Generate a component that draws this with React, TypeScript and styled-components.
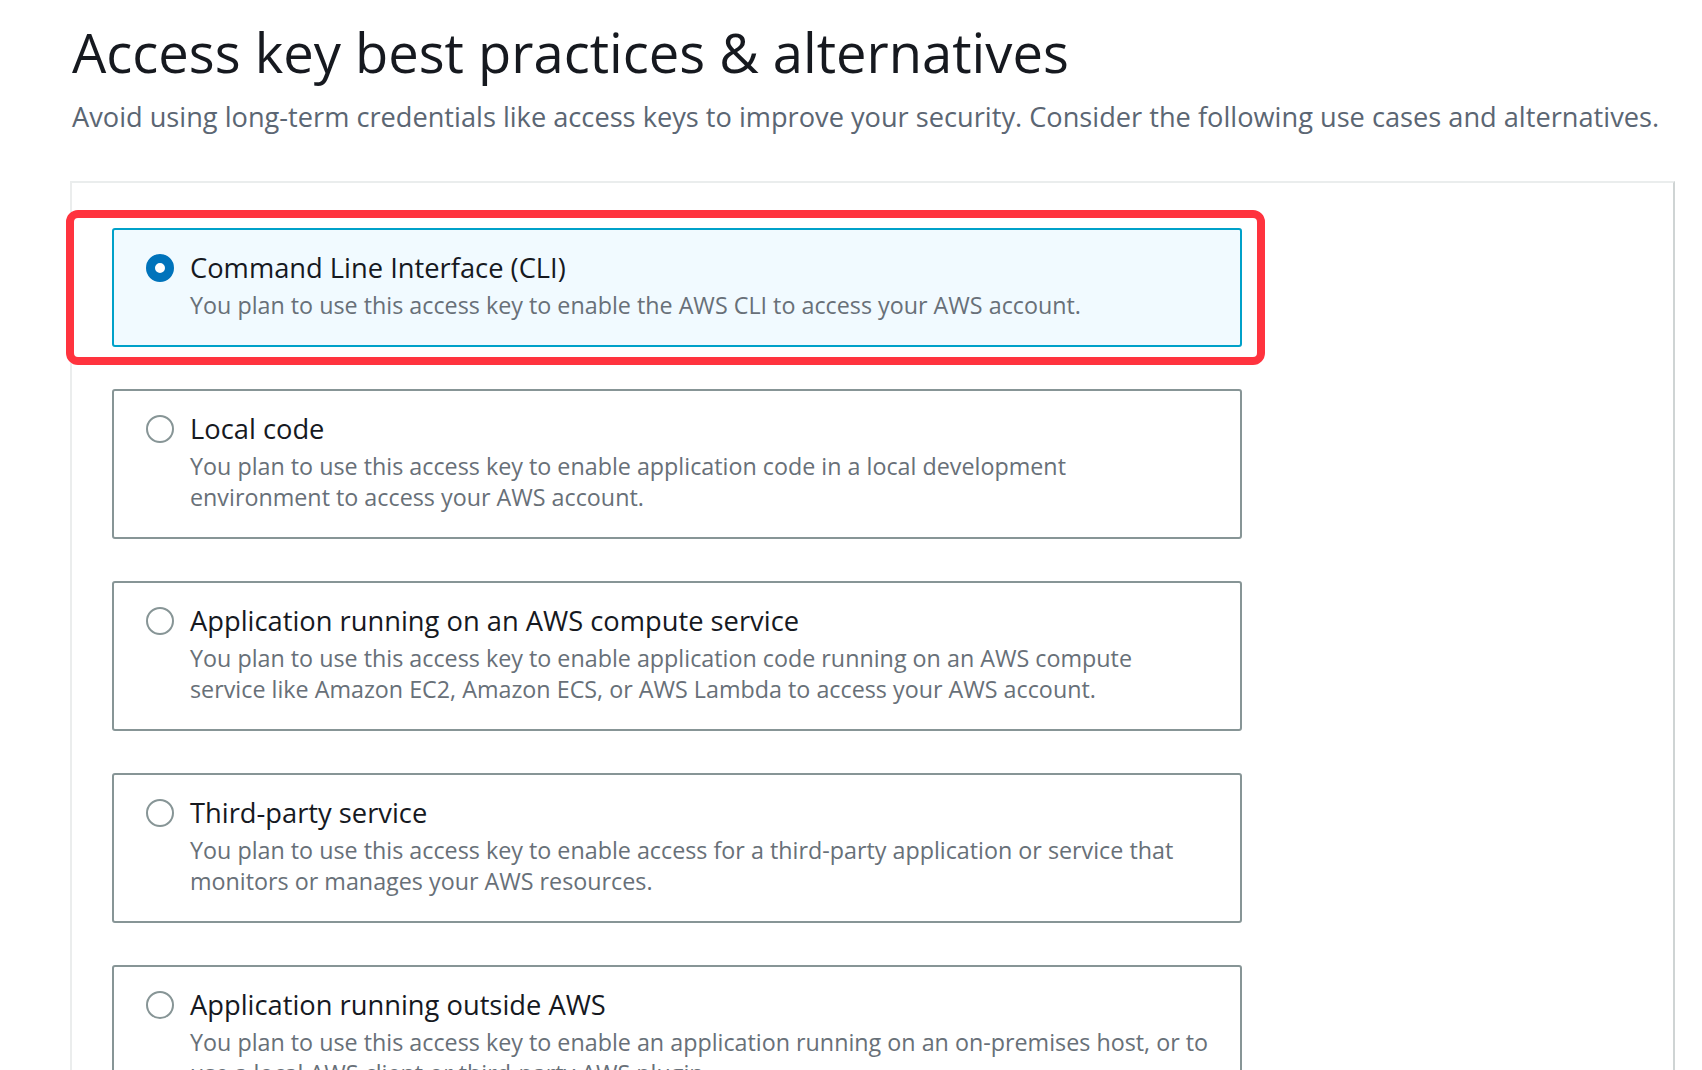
import React from "react";
import styled, { createGlobalStyle } from "styled-components";

const GlobalStyle = createGlobalStyle`
  html, body {
    margin: 0;
    padding: 0;
    background: #ffffff;
    overflow: hidden;
  }
  body {
    font-family: "Open Sans", "Noto Sans", sans-serif;
    -webkit-font-smoothing: antialiased;
  }
`;

const Page = styled.div`
  padding: 20px 0 0 70px;
  width: 1605px;
`;

const Header = styled.header`
  padding-left: 2px;
`;

const Title = styled.h1`
  margin: 0;
  font-size: 54.3px;
  line-height: 64px;
  font-weight: 500;
  color: #16191f;
`;

const Subtitle = styled.p`
  margin: 15px 0 0;
  font-size: 27.2px;
  line-height: 36px;
  color: #5b6673;
  white-space: nowrap;
`;

const Panel = styled.section`
  margin-top: 46px;
  border-top: 2px solid #eaeded;
  border-left: 2px solid #ebeded;
  border-right: 2px solid #cfd4d4;
  padding: 45px 0 0 40px;
  height: 1000px;
  box-sizing: border-box;
`;

const OptionList = styled.div`
  display: flex;
  flex-direction: column;
  gap: 42px;
  width: 1130px;
`;

const Card = styled.label<{ $selected?: boolean }>`
  position: relative;
  display: flex;
  align-items: flex-start;
  gap: 16px;
  padding: 18px 32px 24px 32px;
  border: 2px solid ${(p) => (p.$selected ? "#00a1c9" : "#879596")};
  border-radius: 3px;
  background: ${(p) => (p.$selected ? "#f1faff" : "#ffffff")};
`;

const Highlight = styled.span`
  position: absolute;
  top: -20px;
  left: -48px;
  right: -25px;
  bottom: -20px;
  border: 8px solid #ff333e;
  border-radius: 12px;
  pointer-events: none;
`;

const Radio = styled.span<{ $checked?: boolean }>`
  flex: none;
  width: 28px;
  height: 28px;
  margin-top: 6px;
  box-sizing: border-box;
  border-radius: 50%;
  background: #ffffff;
  border: ${(p) => (p.$checked ? "9px solid #0073bb" : "2px solid #879596")};
`;

const Texts = styled.span`
  display: flex;
  flex-direction: column;
`;

const OptionTitle = styled.span`
  font-size: 27.3px;
  line-height: 40px;
  color: #16191f;
`;

const OptionDesc = styled.span`
  margin-top: 2px;
  font-size: 23.3px;
  line-height: 31px;
  color: #687078;
`;

const Line = styled.span`
  display: block;
  white-space: nowrap;
`;

type Option = { title: string; lines: string[]; selected?: boolean };

const options: Option[] = [
  {
    title: "Command Line Interface (CLI)",
    lines: ["You plan to use this access key to enable the AWS CLI to access your AWS account."],
    selected: true,
  },
  {
    title: "Local code",
    lines: [
      "You plan to use this access key to enable application code in a local development",
      "environment to access your AWS account.",
    ],
  },
  {
    title: "Application running on an AWS compute service",
    lines: [
      "You plan to use this access key to enable application code running on an AWS compute",
      "service like Amazon EC2, Amazon ECS, or AWS Lambda to access your AWS account.",
    ],
  },
  {
    title: "Third-party service",
    lines: [
      "You plan to use this access key to enable access for a third-party application or service that",
      "monitors or manages your AWS resources.",
    ],
  },
  {
    title: "Application running outside AWS",
    lines: [
      "You plan to use this access key to enable an application running on an on-premises host, or to",
      "use a local AWS client or third-party AWS plugin.",
    ],
  },
];

export default function App() {
  return (
    <>
      <GlobalStyle />
      <Page>
        <Header>
          <Title>Access key best practices &amp; alternatives</Title>
          <Subtitle>
            Avoid using long-term credentials like access keys to improve your security. Consider the following use
            cases and alternatives.
          </Subtitle>
        </Header>
        <Panel>
          <OptionList>
            {options.map((o) => (
              <Card key={o.title} $selected={o.selected}>
                {o.selected && <Highlight />}
                <Radio $checked={o.selected} />
                <Texts>
                  <OptionTitle>{o.title}</OptionTitle>
                  <OptionDesc>
                    {o.lines.map((l) => (
                      <Line key={l}>{l}</Line>
                    ))}
                  </OptionDesc>
                </Texts>
              </Card>
            ))}
          </OptionList>
        </Panel>
      </Page>
    </>
  );
}
